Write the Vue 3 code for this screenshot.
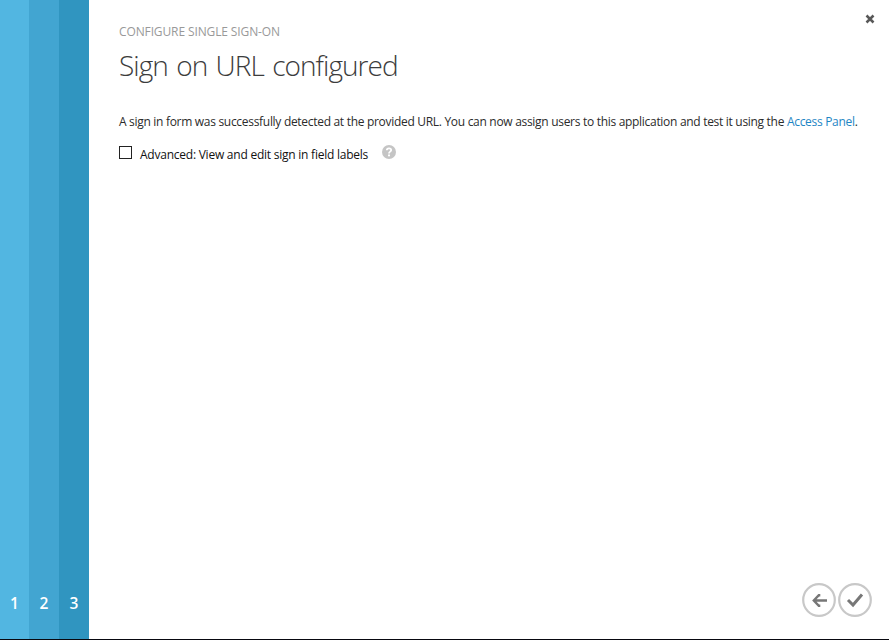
<script setup>
const steps = [1, 2, 3]
</script>

<template>
  <div class="wizard">
    <nav class="steps">
      <div v-for="n in steps" :key="n" class="step" :class="`step-${n}`">{{ n }}</div>
    </nav>
    <main class="content">
      <header>
        <div class="top">
          <span class="eyebrow">CONFIGURE SINGLE SIGN-ON</span>
          <button class="close" aria-label="Close">
            <svg width="10" height="10" viewBox="0 0 10 10"><path d="M1.5 1.5 8.5 8.5M8.5 1.5 1.5 8.5" stroke="#585858" stroke-width="2.5" /></svg>
          </button>
        </div>
        <h1>Sign on URL configured</h1>
      </header>
      <p class="message">A sign in form was successfully detected at the provided URL. You can now assign users to this application and test it using the <a>Access Panel</a>.</p>
      <div class="option">
        <span class="checkbox"></span>
        <span class="label">Advanced: View and edit sign in field labels</span>
        <svg class="help" width="14" height="14" viewBox="0 0 14 14">
          <circle cx="7" cy="7" r="7" fill="#c5c5c5" />
          <path d="M4.8 5.3C4.8 2.7 9.2 2.7 9.2 5.1C9.2 6.7 7 6.6 7 8.5" fill="none" stroke="#fff" stroke-width="1.8" />
          <rect x="6" y="9.5" width="2" height="1.8" fill="#fff" />
        </svg>
      </div>
      <footer>
        <button aria-label="Back">
          <svg width="34" height="34" viewBox="0 0 34 34">
            <circle cx="17" cy="17" r="15.8" fill="none" stroke="#c8c8c8" stroke-width="2.2" />
            <path d="M25 17.5H12.5M18.3 12.2H16.8L11.8 17.5L16.8 22.8H18.3" fill="none" stroke="#777" stroke-width="2.4" />
          </svg>
        </button>
        <button aria-label="Complete">
          <svg width="34" height="34" viewBox="0 0 34 34">
            <circle cx="17" cy="17" r="15.8" fill="none" stroke="#c8c8c8" stroke-width="2.2" />
            <path d="M10 17L15 22L24 11.5" fill="none" stroke="#777" stroke-width="3" />
          </svg>
        </button>
      </footer>
    </main>
  </div>
</template>

<style>
body { margin: 0; background: #fff; }
</style>

<style scoped>
.wizard { display: flex; box-sizing: border-box; width: 889px; height: 640px; border-bottom: 1px solid #08080f; background: #fff; font-family: "Open Sans", "Noto Sans", sans-serif; font-size: 12px; color: #333; overflow: hidden; }
.steps { display: flex; flex: none; }
.step { display: flex; align-items: flex-end; justify-content: center; box-sizing: border-box; width: 30px; padding-bottom: 25px; color: #fff; font-size: 15.5px; font-weight: 600; line-height: 22px; }
.step-1 { width: 29px; background: #52b6e1; }
.step-2 { background: #42a5d1; }
.step-3 { background: #3095c0; }
.content { display: flex; flex: 1; flex-direction: column; min-width: 0; padding: 0 17px 22px 30px; white-space: nowrap; }
.top { display: flex; justify-content: space-between; height: 42px; }
.eyebrow { padding-top: 22px; line-height: 20px; color: #999; letter-spacing: -0.12px; }
button { display: block; padding: 0; border: 0; background: none; }
svg { display: block; }
.close { width: 10px; height: 10px; margin: 14px -3px 0 0; }
h1 { margin: 3px 0 0; height: 41px; font-size: 28px; line-height: 40px; font-weight: 300; color: #3c3c3c; letter-spacing: -0.95px; word-spacing: 2px; }
.message { margin: 26px 0 0; line-height: 20px; letter-spacing: -0.3px; color: #2b2b2b; }
a { color: #1e86c4; }
.option { display: flex; margin-top: 13px; height: 20px; }
.checkbox { box-sizing: border-box; width: 13px; height: 13px; margin-top: 1px; border: 1px solid #222; }
.label { width: 228px; margin-left: 8px; line-height: 20px; color: #111; letter-spacing: -0.235px; }
.help { margin-left: 14px; }
footer { display: flex; justify-content: flex-end; gap: 2px; margin-top: auto; }
</style>
